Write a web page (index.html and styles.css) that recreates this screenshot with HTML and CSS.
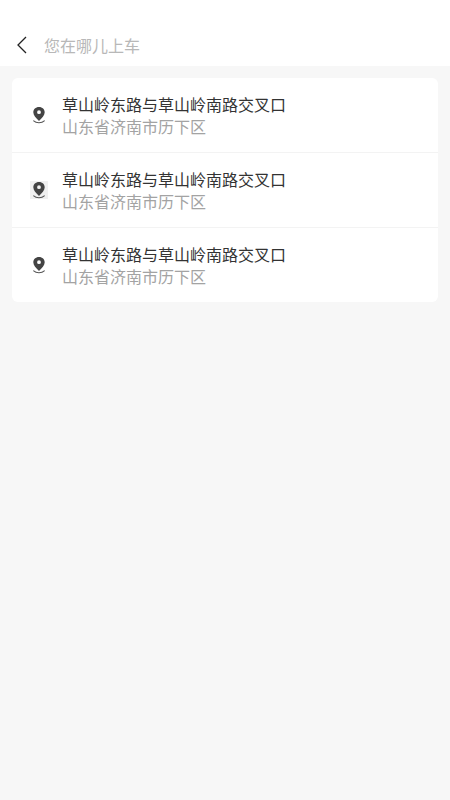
FILE: index.html
```
<!DOCTYPE html>
<html lang="zh-CN">

<head>
    <title>选择上车地点</title>
    <meta charset="utf-8">
    <meta name="viewport" content="width=device-width, initial-scale=1">
    <link rel="stylesheet" href="styles.css">
</head>

<body>
    <svg class="symbols" aria-hidden="true">
        <symbol id="pin" viewBox="0 0 18 18">
            <path fill="#444" fill-rule="evenodd" d="M9 1C5.6 1 3.3 3.3 3.3 6.3C3.3 9.2 6.1 12.4 9 14.9C11.9 12.4 14.7 9.2 14.7 6.3C14.7 3.3 12.4 1 9 1ZM9 4.3A1.9 1.9 0 1 1 9 8.1A1.9 1.9 0 1 1 9 4.3Z" />
            <path fill="none" stroke="#555" stroke-width="1.1" stroke-linecap="round" d="M3.7 14.9C6.2 17.3 11.8 17.3 14.3 14.9" />
        </symbol>
    </svg>
    <header class="search-bar">
        <button class="back" type="button" aria-label="返回">
            <svg width="12" height="18" viewBox="0 0 12 18">
                <path d="M10 1L2 9L10 17" fill="none" stroke="#222" stroke-width="1.3" />
            </svg>
        </button>
        <input class="search-input" type="text" placeholder="您在哪儿上车" aria-label="您在哪儿上车">
    </header>
    <ul class="places">
        <li class="place">
            <svg class="icon"><use href="#pin" /></svg>
            <div class="info">
                <p class="name">草山岭东路与草山岭南路交叉口</p>
                <p class="address">山东省济南市历下区</p>
            </div>
        </li>
        <li class="place">
            <svg class="icon shaded"><use href="#pin" /></svg>
            <div class="info">
                <p class="name">草山岭东路与草山岭南路交叉口</p>
                <p class="address">山东省济南市历下区</p>
            </div>
        </li>
        <li class="place">
            <svg class="icon"><use href="#pin" /></svg>
            <div class="info">
                <p class="name">草山岭东路与草山岭南路交叉口</p>
                <p class="address">山东省济南市历下区</p>
            </div>
        </li>
    </ul>
</body>

</html>
```

FILE: styles.css
```
* {
    box-sizing: border-box;
}

body {
    margin: 0;
    background-color: #f7f7f7;
    color: #333;
    font-family: "Noto Sans CJK SC", sans-serif;
    font-size: 16px;
    line-height: 22px;
}

.symbols {
    display: none;
}

/* room for the phone's status bar on top */
.search-bar {
    display: flex;
    align-items: center;
    padding: 34px 12px 10px;
    background: white;
}

.back {
    display: flex;
    padding: 0 4px;
    border: none;
    background: none;
}

.search-input {
    flex: 1;
    min-width: 0;
    height: 22px;
    margin-left: 12px;
    padding: 0;
    border: none;
    outline: none;
    background: none;
    color: #333;
    font: inherit;
}

.search-input::placeholder {
    color: #b8b8b8;
    opacity: 1;
}

.places {
    margin: 12px;
    padding: 0;
    list-style: none;
    background: white;
    border-radius: 6px;
}

.place {
    display: flex;
    align-items: center;
    padding: 15px 18px;
}

.place + .place {
    border-top: 1px solid #f3f3f3;
}

.icon {
    flex: none;
    width: 18px;
    height: 18px;
    margin-right: 14px;
}

.shaded {
    background: #f0f0f0;
}

.info {
    min-width: 0;
}

.name,
.address {
    margin: 0;
}

.address {
    color: #a3a3a3;
}
```
